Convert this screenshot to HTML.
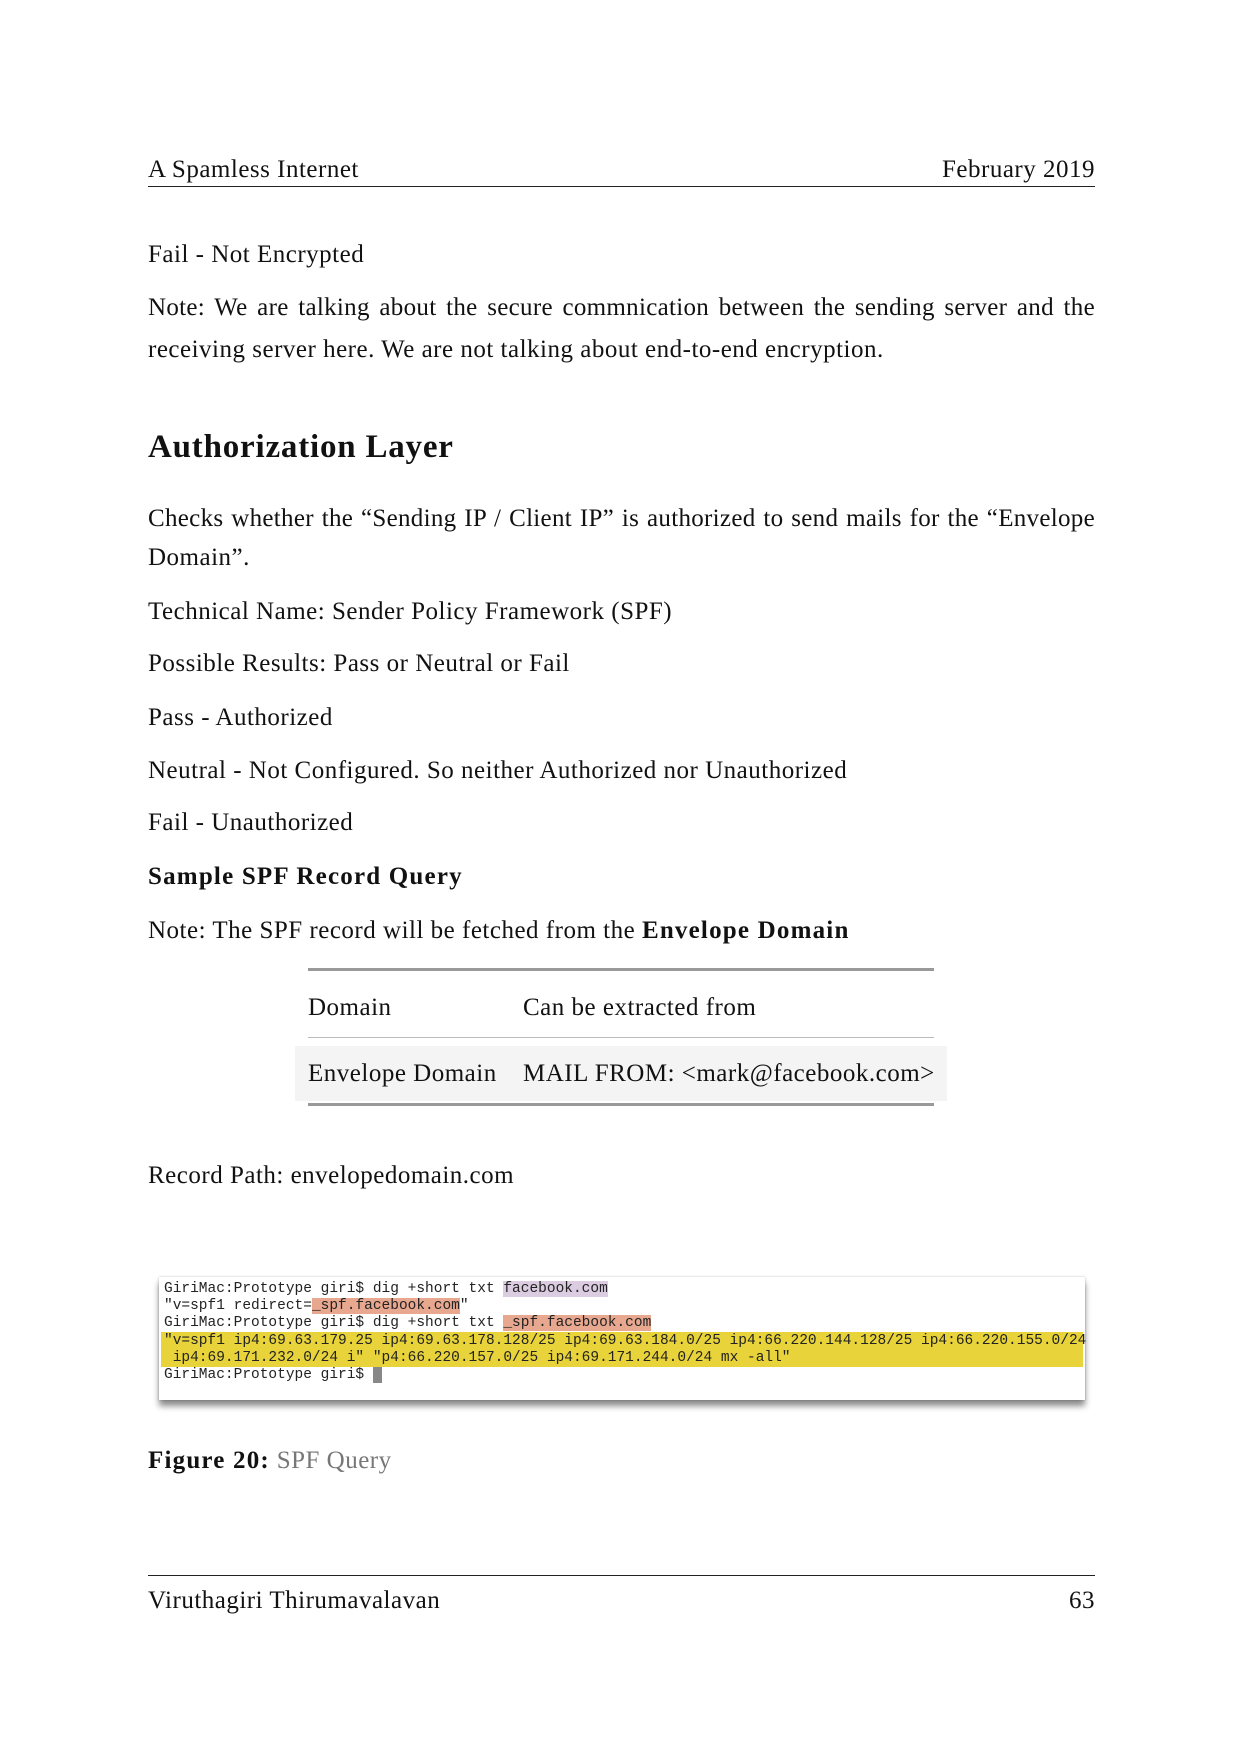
<!DOCTYPE html>
<html><head><meta charset="utf-8"><style>
html,body{margin:0;padding:0;background:#fff;}
body{width:1240px;height:1753px;position:relative;overflow:hidden;font-family:"Liberation Serif",serif;color:#111;}
.t{position:absolute;left:148px;font-size:25px;line-height:30px;white-space:nowrap;letter-spacing:0.5px;}
.t b{letter-spacing:1.2px;}
.r{position:absolute;left:148px;width:947px;}
.mono{position:absolute;left:164px;font-family:"Liberation Mono",monospace;font-size:14.5px;line-height:17.2px;white-space:pre;color:#222;}
</style></head><body>
<div class="t" style="top:155px">A Spamless Internet</div>
<div class="t" style="top:155px;left:auto;right:145px">February 2019</div>
<div class="r" style="top:186px;height:1px;background:#222"></div>

<div class="t" style="top:240px">Fail - Not Encrypted</div>
<div class="t" style="top:293px;width:947px;text-align:justify;text-align-last:justify;letter-spacing:0.3px">Note: We are talking about the secure commnication between the sending server and the</div>
<div class="t" style="top:335px">receiving server here. We are not talking about end-to-end encryption.</div>

<div class="t" style="top:429px;font-size:33px;line-height:36px;font-weight:bold;letter-spacing:0.8px">Authorization Layer</div>

<div class="t" style="top:504px;width:947px;text-align:justify;text-align-last:justify;letter-spacing:0.3px">Checks whether the “Sending IP / Client IP” is authorized to send mails for the “Envelope</div>
<div class="t" style="top:543px">Domain”.</div>
<div class="t" style="top:597px">Technical Name: Sender Policy Framework (SPF)</div>
<div class="t" style="top:649px">Possible Results: Pass or Neutral or Fail</div>
<div class="t" style="top:703px">Pass - Authorized</div>
<div class="t" style="top:756px">Neutral - Not Configured. So neither Authorized nor Unauthorized</div>
<div class="t" style="top:808px">Fail - Unauthorized</div>
<div class="t" style="top:862px;font-weight:bold;letter-spacing:1.2px">Sample SPF Record Query</div>
<div class="t" style="top:916px">Note: The SPF record will be fetched from the <b>Envelope Domain</b></div>

<div style="position:absolute;left:308px;top:968px;width:626px;height:3px;background:#999"></div>
<div class="t" style="left:308px;top:993px">Domain</div>
<div class="t" style="left:523px;top:993px">Can be extracted from</div>
<div style="position:absolute;left:308px;top:1037px;width:626px;height:1px;background:#bbb"></div>
<div style="position:absolute;left:295px;top:1046px;width:652px;height:55px;background:#f4f4f4"></div>
<div class="t" style="left:308px;top:1059px">Envelope Domain</div>
<div class="t" style="left:523px;top:1059px">MAIL FROM: &lt;mark@facebook.com&gt;</div>
<div style="position:absolute;left:308px;top:1103px;width:626px;height:3px;background:#999"></div>

<div class="t" style="top:1161px">Record Path: envelopedomain.com</div>

<div style="position:absolute;left:159px;top:1277px;width:926px;height:123px;background:#fff;box-shadow:0 6px 6px rgba(0,0,0,0.45), 0 0 2px rgba(0,0,0,0.25)"></div>
<div style="position:absolute;left:161px;top:1332px;width:922px;height:35px;background:#e8d43a"></div>
<div class="mono" style="top:1281px">GiriMac:Prototype giri$ dig +short txt <span style="background:#dccce2">facebook.com</span>
"v=spf1 redirect=<span style="background:#e8a890">_spf.facebook.com</span>"
GiriMac:Prototype giri$ dig +short txt <span style="background:#e8a890">_spf.facebook.com</span>
"v=spf1 ip4:69.63.179.25 ip4:69.63.178.128/25 ip4:69.63.184.0/25 ip4:66.220.144.128/25 ip4:66.220.155.0/24
 ip4:69.171.232.0/24 i" "p4:66.220.157.0/25 ip4:69.171.244.0/24 mx -all"
GiriMac:Prototype giri$ <span style="background:#888"> </span></div>

<div class="t" style="top:1446px"><b>Figure 20:</b> <span style="color:#777">SPF Query</span></div>

<div class="r" style="top:1575px;height:1px;background:#222"></div>
<div class="t" style="top:1586px">Viruthagiri Thirumavalavan</div>
<div class="t" style="top:1586px;left:auto;right:145px">63</div>
</body></html>
